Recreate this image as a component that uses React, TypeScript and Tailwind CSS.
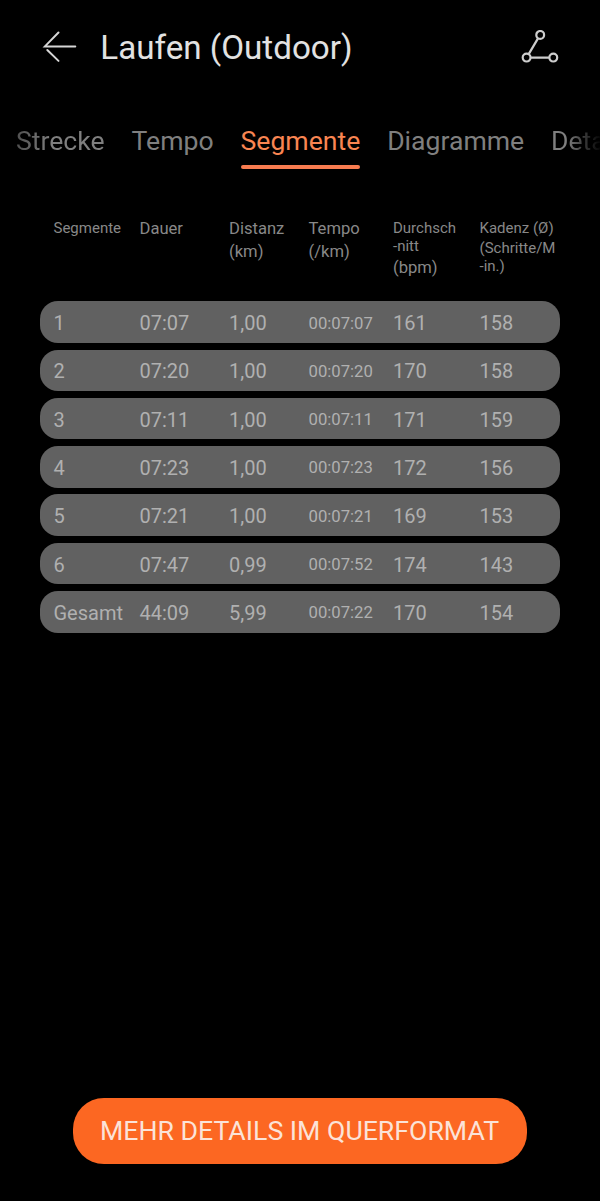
const columns = 'grid grid-cols-[86px_89.5px_79.5px_84.5px_86.5px_80.5px] pl-[13.5px]';

const segments = [
  ['1', '07:07', '1,00', '00:07:07', '161', '158'],
  ['2', '07:20', '1,00', '00:07:20', '170', '158'],
  ['3', '07:11', '1,00', '00:07:11', '171', '159'],
  ['4', '07:23', '1,00', '00:07:23', '172', '156'],
  ['5', '07:21', '1,00', '00:07:21', '169', '153'],
  ['6', '07:47', '0,99', '00:07:52', '174', '143'],
  ['Gesamt', '44:09', '5,99', '00:07:22', '170', '154'],
];

function TopBar() {
  return (
    <header className="flex h-[96px] items-center pl-[42px] pr-[40px]">
      <svg className="h-[34px] w-[36px] shrink-0" viewBox="0 0 36 34" fill="none" stroke="#d6d6d6" strokeWidth="2" strokeLinecap="round">
        <path d="M16.5 1.5 2.9 15.4H33.3M5.3 19l11.2 10.9" />
      </svg>
      <h1 className="ml-[22.3px] whitespace-nowrap text-[33.2px] leading-[40px] text-[#e2e2e2]">Laufen (Outdoor)</h1>
      <svg className="ml-auto h-[36px] w-[40px] shrink-0" viewBox="0 0 40 36" fill="none" stroke="#cdcdcd" strokeWidth="2.2">
        <circle cx="20.2" cy="4.9" r="3.9" />
        <circle cx="6.6" cy="27.6" r="3.9" />
        <circle cx="33.3" cy="27.6" r="3.9" />
        <path d="M18 8.4 8.7 24.1M10.5 27.6H29.4" />
      </svg>
    </header>
  );
}

function Tabs() {
  return (
    <nav className="flex h-[73px] items-start gap-[26.9px] overflow-hidden whitespace-nowrap pl-[16px] pt-[26px] text-[26.6px] leading-[38px] text-[#7f7f7f]">
      <span className="bg-linear-to-r from-[#505050] to-[#7f7f7f] to-40% bg-clip-text text-transparent">Strecke</span>
      <span>Tempo</span>
      <span className="flex shrink-0 flex-col gap-[5px] text-[#f98552]">
        Segmente
        <span className="h-[3.5px] rounded-full bg-[#f87c50]" />
      </span>
      <span>Diagramme</span>
      <span className="bg-linear-to-r from-[#7f7f7f] from-[16px] to-black to-[58px] bg-clip-text text-transparent">Details</span>
    </nav>
  );
}

function TableHead() {
  return (
    <div className={`${columns} h-[83px] whitespace-nowrap text-[16.6px] leading-[22.7px] text-[#888888]`}>
      <div className="text-[15px] leading-[20px]">Segmente</div>
      <div>Dauer</div>
      <div>Distanz<br />(km)</div>
      <div>Tempo<br />(/km)</div>
      <div className="pt-[1px]">
        <div className="text-[15px] leading-[18px]">Durchsch<br />-nitt</div>
        <div className="pt-[2px]">(bpm)</div>
      </div>
      <div className="pt-[1px] text-[15px] leading-[18px]">
        <div>Kadenz (Ø)</div>
        <div className="pt-[2px]">(Schritte/M<br />-in.)</div>
      </div>
    </div>
  );
}

export default function App() {
  return (
    <main className="flex h-[1201px] w-[600px] flex-col overflow-hidden bg-black font-['Roboto',sans-serif]">
      <TopBar />
      <Tabs />
      <section className="px-[40px] pt-[49.3px]">
        <TableHead />
        <div className="flex flex-col gap-[6.7px]">
          {segments.map((row) => (
            <div key={row[0]} className={`${columns} h-[41.6px] items-center rounded-[18px] bg-[#616161] pt-[2px] text-[20px] leading-[24px] text-[#b0b0b0]`}>
              {row.map((value, i) => (
                <span key={i} className={i === 3 ? 'pt-[1px] text-[16.7px]' : ''}>{value}</span>
              ))}
            </div>
          ))}
        </div>
      </section>
      <button className="mx-auto mb-[37px] mt-auto h-[66px] w-[454px] whitespace-nowrap rounded-[31px] bg-[#fc6722] pr-[1px] text-[26.7px] leading-[32px] text-[#fbe3d8]">
        MEHR DETAILS IM QUERFORMAT
      </button>
    </main>
  );
}
